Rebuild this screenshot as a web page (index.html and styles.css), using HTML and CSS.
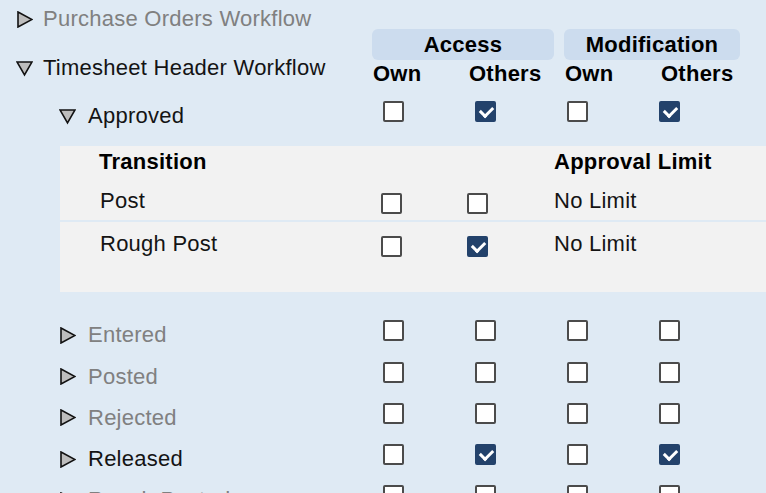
FILE: index.html
```html
<!DOCTYPE html>
<html lang="en">
<head>
    <meta charset="UTF-8">
    <title>Workflow Permissions</title>
    <link rel="stylesheet" href="styles.css">
</head>
<body>
    <div class="tree">
        <!-- collapsed workflow -->
        <div class="wf">
            <div class="wf-head short">
                <div class="toggle muted">
                    <svg class="caret" viewBox="0 0 17 17"><polygon points="2,1 16,8.5 2,16"/></svg>
                    <span>Purchase Orders Workflow</span>
                </div>
            </div>
        </div>

        <!-- expanded workflow -->
        <div class="wf">
            <div class="wf-head">
                <div class="toggle">
                    <svg class="caret" viewBox="0 0 17 17"><polygon points="1,2 16,2 8.5,15"/></svg>
                    <span>Timesheet Header Workflow</span>
                </div>
                <div class="perm-head">
                    <div class="group access">
                        <div class="pill">Access</div>
                        <div class="subs"><span>Own</span><span>Others</span></div>
                    </div>
                    <div class="group modify">
                        <div class="pill">Modification</div>
                        <div class="subs"><span>Own</span><span>Others</span></div>
                    </div>
                </div>
            </div>

            <div class="states">
                <div class="state-row">
                    <div class="toggle">
                        <svg class="caret" viewBox="0 0 17 17"><polygon points="1,2 16,2 8.5,15"/></svg>
                        <span>Approved</span>
                    </div>
                    <span class="cb"></span>
                    <span class="cb on"></span>
                    <span class="cb"></span>
                    <span class="cb on"></span>
                </div>

                <div class="transitions">
                    <div class="tr-head">
                        <div>Transition</div>
                        <div class="limit">Approval Limit</div>
                    </div>
                    <div class="tr-row">
                        <div class="tr-name">Post</div>
                        <span class="cb"></span>
                        <span class="cb"></span>
                        <div>No Limit</div>
                    </div>
                    <div class="tr-row last">
                        <div class="tr-name">Rough Post</div>
                        <span class="cb"></span>
                        <span class="cb on"></span>
                        <div>No Limit</div>
                    </div>
                </div>

                <div class="state-row">
                    <div class="toggle muted">
                        <svg class="caret" viewBox="0 0 17 17"><polygon points="2,1 16,8.5 2,16"/></svg>
                        <span>Entered</span>
                    </div>
                    <span class="cb"></span>
                    <span class="cb"></span>
                    <span class="cb"></span>
                    <span class="cb"></span>
                </div>
                <div class="state-row">
                    <div class="toggle muted">
                        <svg class="caret" viewBox="0 0 17 17"><polygon points="2,1 16,8.5 2,16"/></svg>
                        <span>Posted</span>
                    </div>
                    <span class="cb"></span>
                    <span class="cb"></span>
                    <span class="cb"></span>
                    <span class="cb"></span>
                </div>
                <div class="state-row">
                    <div class="toggle muted">
                        <svg class="caret" viewBox="0 0 17 17"><polygon points="2,1 16,8.5 2,16"/></svg>
                        <span>Rejected</span>
                    </div>
                    <span class="cb"></span>
                    <span class="cb"></span>
                    <span class="cb"></span>
                    <span class="cb"></span>
                </div>
                <div class="state-row">
                    <div class="toggle">
                        <svg class="caret" viewBox="0 0 17 17"><polygon points="2,1 16,8.5 2,16"/></svg>
                        <span>Released</span>
                    </div>
                    <span class="cb"></span>
                    <span class="cb on"></span>
                    <span class="cb"></span>
                    <span class="cb on"></span>
                </div>
                <div class="state-row">
                    <div class="toggle muted">
                        <svg class="caret" viewBox="0 0 17 17"><polygon points="2,1 16,8.5 2,16"/></svg>
                        <span>Rough Posted</span>
                    </div>
                    <span class="cb"></span>
                    <span class="cb"></span>
                    <span class="cb"></span>
                    <span class="cb"></span>
                </div>
            </div>
        </div>
    </div>
</body>
</html>
```

FILE: styles.css
```css
* {
    margin: 0;
    padding: 0;
    box-sizing: border-box;
}
body {
    background: #dfeaf4;
    font-family: "Liberation Sans", Arial, sans-serif;
    font-size: 22px;
    line-height: 26px;
    letter-spacing: 0.25px;
    color: #141414;
    overflow: hidden;
}
.tree {
    width: 766px;
}
.muted {
    color: #808080;
}

/* expand / collapse arrows */
.toggle {
    display: flex;
    align-items: center;
    gap: 10px;
    white-space: nowrap;
}
.caret {
    width: 17px;
    height: 17px;
    flex: none;
}
.caret polygon {
    fill: #bdbdbd;
    stroke: #121212;
    stroke-width: 1.6;
}

/* workflow header line */
.wf-head {
    display: flex;
    align-items: flex-start;
}
.wf-head .toggle {
    width: 372px;
    padding-left: 16px;
    padding-top: 26px;
}
.wf-head.short {
    height: 29px;
}
.wf-head.short .toggle {
    padding-top: 6px;
}
.perm-head {
    display: flex;
    gap: 10px;
    font-weight: bold;
    color: #000;
}
.group.access {
    width: 182px;
}
.group.modify {
    width: 176px;
}
.pill {
    height: 31px;
    line-height: 31px;
    background: #ccdcee;
    border-radius: 6px;
    text-align: center;
}
.subs {
    display: grid;
    grid-template-columns: 96px auto;
    margin-top: 1px;
    padding-left: 1px;
}

/* state rows */
.states {
    padding-top: 4px;
}
.state-row {
    display: grid;
    grid-template-columns: 383px repeat(4, 92px);
    align-items: start;
    height: 41.25px;
    padding-top: 10px;
}
.state-row .toggle {
    padding-left: 59px;
    padding-top: 2px;
    gap: 12px;
}

/* checkboxes */
.cb {
    display: block;
    position: relative;
    width: 21px;
    height: 21px;
    border: 2px solid #4b4b4b;
    border-radius: 2px;
    background: #fff;
}
.cb.on {
    background: #23426b;
    border-color: #23426b;
}
.cb.on::after {
    content: "";
    position: absolute;
    left: 5px;
    top: 1px;
    width: 6px;
    height: 10px;
    border: solid #fff;
    border-width: 0 3px 3px 0;
    transform: rotate(45deg);
}

/* transitions of the open state */
.transitions {
    margin: 14px 0 18px 60px;
    background: #f2f2f2;
}
.tr-head,
.tr-row {
    display: grid;
    grid-template-columns: 282px 86px 87px 1fr;
    align-items: start;
    padding-left: 39px;
}
.tr-head {
    height: 33px;
    padding-top: 3px;
    font-weight: bold;
    color: #000;
}
.tr-head .limit {
    grid-column: 4;
}
.tr-row {
    height: 43px;
    padding-top: 9px;
    border-bottom: 2px solid #dfeaf4;
}
.tr-row.last {
    height: 70px;
    border-bottom: none;
}
.tr-name {
    padding-left: 1px;
}
.tr-row .cb {
    margin-top: 5px;
}
```
